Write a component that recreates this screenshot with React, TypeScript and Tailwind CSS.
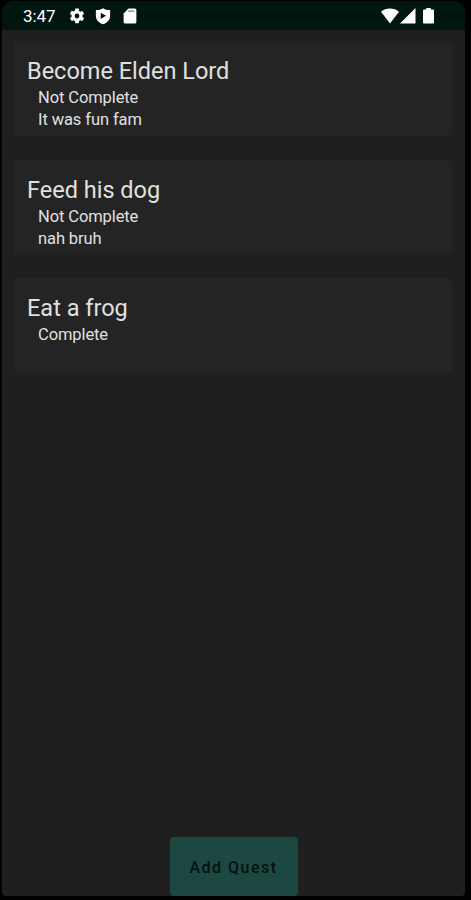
import React from "react";

interface Quest {
  id: number;
  title: string;
  status: string;
  note: string;
}

const quests: Quest[] = [
  {
    id: 1,
    title: "Become Elden Lord",
    status: "Not Complete",
    note: "It was fun fam",
  },
  { id: 2, title: "Feed his dog", status: "Not Complete", note: "nah bruh" },
  { id: 3, title: "Eat a frog", status: "Complete", note: "" },
];

const StatusBar: React.FC = () => {
  return (
    <div className="flex h-[29px] shrink-0 items-center bg-[#011511] pl-[21px] pr-[31px] text-white">
      <span className="w-[45px] pt-[2px] text-[17px] leading-none tracking-[-0.1px]">
        3:47
      </span>
      {/* Settings */}
      <svg className="h-[18px] w-[18px]" viewBox="0 0 24 24" fill="currentColor">
        <path d="M19.14 12.94c.04-.3.06-.61.06-.94 0-.32-.02-.64-.07-.94l2.03-1.58a.49.49 0 0 0 .12-.61l-1.92-3.32a.49.49 0 0 0-.59-.22l-2.39.96a7 7 0 0 0-1.62-.94l-.36-2.54A.48.48 0 0 0 13.92 2h-3.84a.47.47 0 0 0-.47.41l-.36 2.54c-.59.24-1.13.57-1.62.94l-2.39-.96a.48.48 0 0 0-.59.22L2.74 8.87a.47.47 0 0 0 .12.61l2.03 1.58c-.05.3-.09.63-.09.94s.02.64.07.94l-2.03 1.58a.49.49 0 0 0-.12.61l1.92 3.32c.12.22.37.29.59.22l2.39-.96c.5.38 1.03.7 1.62.94l.36 2.54c.05.24.24.41.48.41h3.84c.24 0 .44-.17.47-.41l.36-2.54a6.7 6.7 0 0 0 1.62-.94l2.39.96c.22.08.47 0 .59-.22l1.92-3.32a.47.47 0 0 0-.12-.61zM12 15.2a3.2 3.2 0 1 1 0-6.4 3.2 3.2 0 0 1 0 6.4z" />
      </svg>
      {/* Play Protect */}
      <svg
        className="ml-2 h-[18px] w-[18px]"
        viewBox="0 0 24 24"
        fill="currentColor"
        fillRule="evenodd"
      >
        <path d="M12 1.5c2.5 1.7 5.5 2.5 9.500 2.500v7.500c0 5.500-4 9.500-9.500 11.500-5.500-2-9.500-6-9.500-11.500V4c4 0 7-.8 9.500-2.500zM9 7.500v8.400l7-4.200z" />
      </svg>
      {/* SD card */}
      <svg
        className="ml-[9px] h-[18px] w-[18px]"
        viewBox="0 0 24 24"
        fill="currentColor"
      >
        <path d="M18.500 2H10L3.500 8.500V20a2 2 0 0 0 2 2h13a2 2 0 0 0 2-2V4a2 2 0 0 0-2-2z" />
        <path
          d="M9.500 5.800h8"
          stroke="#011511"
          strokeOpacity="0.45"
          strokeWidth="2"
        />
      </svg>
      {/* Wifi, signal, battery */}
      <svg className="ml-auto h-[16px] w-[18px]" viewBox="0 0 18 16" fill="currentColor">
        <path d="M0 3.800C2.500 1.500 5.600.5 9 .5s6.500 1 9 3.300L9 15.500z" />
      </svg>
      <svg className="ml-px h-[16px] w-[16px]" viewBox="0 0 16 16" fill="currentColor">
        <path d="M0 15.500H15.500V0z" />
      </svg>
      <svg className="ml-[7px] h-[16px] w-[11px]" viewBox="0 0 11 16" fill="currentColor">
        <path d="M3.200 0h4.600v1.600H10a1 1 0 0 1 1 1v12a1 1 0 0 1-1 1H1a1 1 0 0 1-1-1v-12a1 1 0 0 1 1-1h2.200z" />
      </svg>
    </div>
  );
};

const QuestCard: React.FC<{ quest: Quest }> = ({ quest }) => {
  return (
    <div className="h-[95px] rounded-[5px] bg-[#242424] pl-[13px] pt-[15px] text-[#e0e0e0]">
      <h2 className="text-[23.500px] leading-[30px]">{quest.title}</h2>
      <div className="pl-[11px] pt-px text-[16.500px] leading-[22px] tracking-[-0.1px]">
        <p>{quest.status}</p>
        <p>{quest.note}</p>
      </div>
    </div>
  );
};

const App: React.FC = () => {
  return (
    <div className="h-[900px] w-[471px] bg-black pl-[2px] pt-px font-['Roboto',sans-serif]">
      <div className="flex h-[895px] w-[463px] flex-col overflow-hidden rounded-t-[12px] rounded-b-[4px] bg-[#1f1f1f]">
        <StatusBar />
        <div className="flex flex-col gap-[23.500px] pl-3 pr-[13px] pt-[11px]">
          {quests.map((quest) => (
            <QuestCard key={quest.id} quest={quest} />
          ))}
        </div>
        <button className="mx-auto mt-auto h-[59px] w-[128px] rounded-[4px] bg-[#1d4841] pt-[3px] text-[16px] font-medium tracking-[1.500px] text-[#04110f]">
          Add Quest
        </button>
      </div>
    </div>
  );
};

export default App;
